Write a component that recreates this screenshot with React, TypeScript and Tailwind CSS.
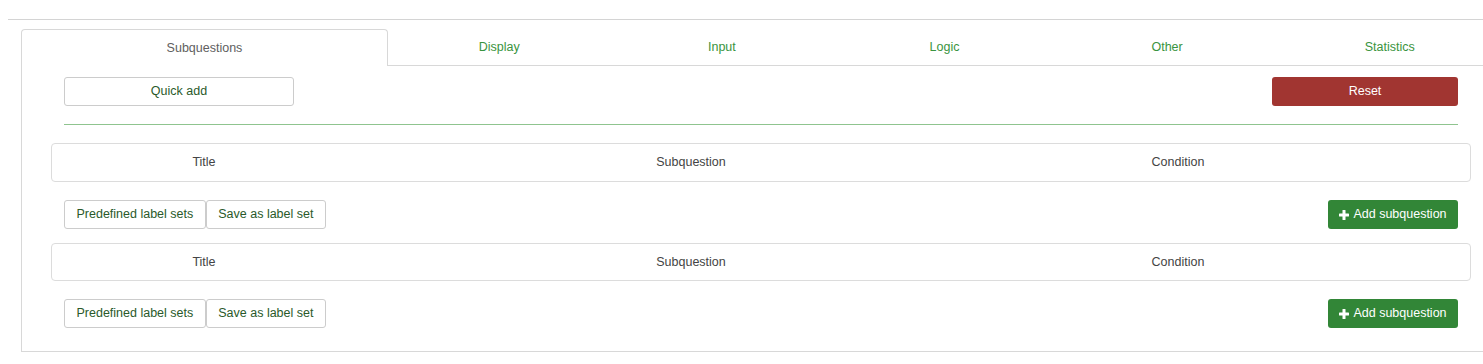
import React from "react";

const tabs = ["Subquestions", "Display", "Input", "Logic", "Other", "Statistics"];

const PlusIcon = () => (
  <svg width="10" height="10" viewBox="0 0 10 10" className="shrink-0">
    <rect x="3.5" y="0" width="3" height="10" rx="0.6" fill="white" />
    <rect x="0" y="3.5" width="10" height="3" rx="0.6" fill="white" />
  </svg>
);

const SubquestionBlock = ({ last }: { last?: boolean }) => (
  <div>
    {/* Table header */}
    <div
      className={`${last ? "h-[38px]" : "h-[39px]"} border border-[#dcdcdc] rounded-[4px] flex items-center text-[#444]`}
    >
      <div className="w-[304px] text-center">Title</div>
      <div className="w-[670px] text-center">Subquestion</div>
      <div className="w-[304px] text-center">Condition</div>
    </div>

    {/* Actions */}
    <div className={`flex items-center justify-between px-[13px] mt-[18px] ${last ? "" : "mb-[14px]"}`}>
      <div className="flex">
        <button className="h-[29px] px-[11.5px] border border-[#cccccc] rounded-[3px] bg-white text-[#2a5a2a]">
          Predefined label sets
        </button>
        <button className="h-[29px] px-[11.5px] border border-[#cccccc] rounded-[3px] bg-white text-[#2a5a2a]">
          Save as label set
        </button>
      </div>
      <button className="h-[29px] w-[130px] flex items-center justify-center gap-[4px] rounded-[3px] bg-[#328637] text-white">
        <PlusIcon />
        Add subquestion
      </button>
    </div>
  </div>
);

export default function App() {
  return (
    <div className="w-[1483px] h-[364px] overflow-hidden bg-white font-['Liberation_Sans',Arial,sans-serif] text-[12.5px]">
      <div className="ml-[8px] mt-[19px] border-t border-[#d4d4d4] pt-[9px] pl-[13px]">
        <div className="w-[1480px]">
          {/* Tabs */}
          <div className="flex h-[37px]">
            {tabs.map((t, i) =>
              i === 0 ? (
                <div
                  key={t}
                  className="w-[367px] border border-b-0 border-[#d8d8d8] rounded-t-[4px] flex items-center justify-center text-[#606060] bg-white"
                >
                  {t}
                </div>
              ) : (
                <div
                  key={t}
                  className="flex-1 border-b border-[#d8d8d8] flex items-center justify-center text-[#3a9440]"
                >
                  {t}
                </div>
              )
            )}
          </div>

          {/* Panel */}
          <div className="border-l border-r border-b border-[#d8d8d8] px-[29px] pt-[11px] pb-[23px]">
            <div className="px-[13px]">
              <div className="flex items-center justify-between">
                <button className="h-[29px] w-[230px] border border-[#cccccc] rounded-[3px] bg-white text-[#2a5a2a]">
                  Quick add
                </button>
                <button className="h-[29px] w-[186px] rounded-[3px] bg-[#a13531] text-white">
                  Reset
                </button>
              </div>
              <div className="mt-[18px] mb-[18px] border-t border-[#8fc48f]" />
            </div>

            <SubquestionBlock />
            <SubquestionBlock last />
          </div>
        </div>
      </div>
    </div>
  );
}
